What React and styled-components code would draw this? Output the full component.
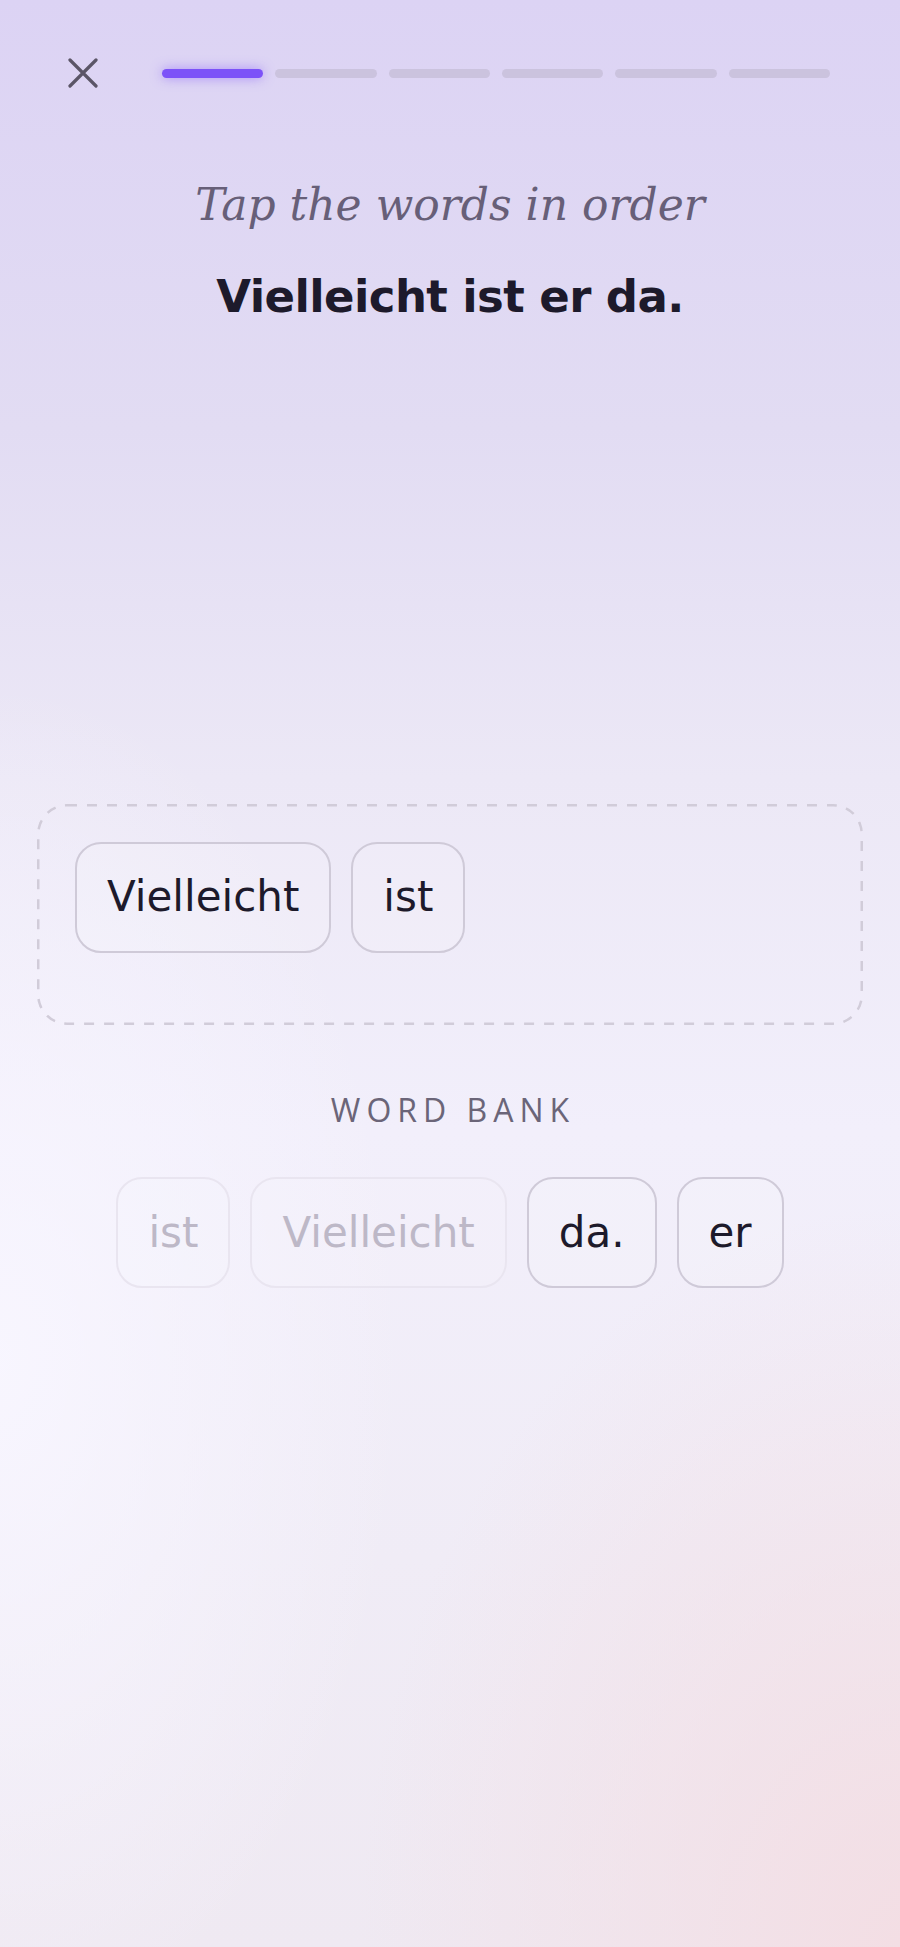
import styled, { createGlobalStyle } from 'styled-components';

const GlobalStyle = createGlobalStyle`
    html, body {
        margin: 0;
        padding: 0;
    }

    body {
        min-height: 1947px;
        background:
            radial-gradient(ellipse 60% 38% at 100% 100%, rgba(243, 222, 228, 1) 0%, rgba(243, 222, 228, 0) 100%),
            radial-gradient(ellipse 45% 35% at 0% 70%, rgba(248, 246, 255, 0.95) 0%, rgba(248, 246, 255, 0) 100%),
            linear-gradient(180deg, #dcd3f4 0%, #e2dcf3 22%, #ece8f6 40%, #f2effb 58%, #f0ecf6 80%, #efe9f2 100%);
        background-repeat: no-repeat;
        font-family: "DejaVu Sans", sans-serif;
    }
`;

// dashed outline drawn as svg so the dash length can be set
const dashedOutline = encodeURIComponent(
    "<svg xmlns='http://www.w3.org/2000/svg'><rect x='0' y='0' width='100%' height='100%' rx='30' ry='30' fill='none' stroke='#d1ccd9' stroke-width='5' stroke-dasharray='10 10'/></svg>"
);

const Screen = styled.div`
    min-height: 1947px;
    display: flex;
    flex-direction: column;
`;

const TopBar = styled.div`
    display: flex;
    align-items: center;
    padding: 51px 70px 0 61px;
    gap: 57px;
`;

const CloseButton = styled.button`
    width: 44px;
    height: 44px;
    padding: 0;
    border: none;
    background: transparent;
    display: flex;
    align-items: center;
    justify-content: center;
    color: #5b5567;
`;

const Progress = styled.div`
    flex: 1;
    display: flex;
    gap: 12px;
`;

const Segment = styled.div`
    flex: 1;
    height: 9px;
    border-radius: 5px;
    background: ${({ $active }) => ($active ? '#7c52f8' : '#cbc3de')};
    box-shadow: ${({ $active }) => ($active ? '0 0 12px rgba(124, 82, 248, 0.55)' : 'none')};
`;

const Prompt = styled.h2`
    margin: 84px 0 0;
    text-align: center;
    font-family: "DejaVu Serif", serif;
    font-style: italic;
    font-weight: 400;
    font-size: 44px;
    line-height: 1.2;
    color: #675f78;
`;

const Sentence = styled.h1`
    margin: 38px 0 0;
    text-align: center;
    font-family: "DejaVu Sans", sans-serif;
    font-weight: 700;
    font-size: 45px;
    line-height: 1.2;
    letter-spacing: -0.6px;
    color: #1d1a2b;
`;

const AnswerBox = styled.div`
    margin: 480px 37px 0;
    height: 221px;
    box-sizing: border-box;
    padding: 38px;
    border-radius: 30px;
    background-image: url("data:image/svg+xml,${dashedOutline}");
    background-repeat: no-repeat;
    display: flex;
    flex-wrap: wrap;
    align-content: flex-start;
    gap: 20px;
`;

const BankLabel = styled.div`
    margin-top: 66px;
    text-align: center;
    font-family: "Open Sans", sans-serif;
    font-weight: 400;
    font-size: 32px;
    line-height: 1.2;
    letter-spacing: 6px;
    padding-left: 6px;
    color: #6b6578;
`;

const Bank = styled.div`
    margin-top: 48px;
    display: flex;
    justify-content: center;
    gap: 20px;
`;

const Chip = styled.button`
    height: 111px;
    box-sizing: border-box;
    padding: 0 30px;
    border-radius: 26px;
    border: 2px solid ${({ $used }) => ($used ? '#e9e5f0' : '#cfcad8')};
    background: ${({ $used }) => ($used ? 'rgba(255, 255, 255, 0.08)' : 'rgba(255, 255, 255, 0.12)')};
    display: flex;
    align-items: center;
    font-family: "DejaVu Sans", sans-serif;
    font-size: 42px;
    line-height: 1;
    color: ${({ $used }) => ($used ? '#bdb8c7' : '#1d1a2b')};
`;

const steps = [true, false, false, false, false, false];
const placed = ['Vielleicht', 'ist'];
const bank = [
    { word: 'ist', used: true },
    { word: 'Vielleicht', used: true },
    { word: 'da.', used: false },
    { word: 'er', used: false },
];

export default function App() {
    return (
        <>
            <GlobalStyle />
            <Screen>
                <TopBar>
                    <CloseButton aria-label="Close">
                        <svg width="30" height="30" viewBox="0 0 30 30" fill="none">
                            <path d="M2 2 L28 28 M28 2 L2 28" stroke="currentColor" strokeWidth="3.2" strokeLinecap="round" />
                        </svg>
                    </CloseButton>
                    <Progress>
                        {steps.map((active, i) => (
                            <Segment key={i} $active={active} />
                        ))}
                    </Progress>
                </TopBar>

                <Prompt>Tap the words in order</Prompt>
                <Sentence>Vielleicht ist er da.</Sentence>

                <AnswerBox>
                    {placed.map((word) => (
                        <Chip key={word}>{word}</Chip>
                    ))}
                </AnswerBox>

                <BankLabel>WORD BANK</BankLabel>
                <Bank>
                    {bank.map((item) => (
                        <Chip key={item.word} $used={item.used}>{item.word}</Chip>
                    ))}
                </Bank>
            </Screen>
        </>
    );
}
